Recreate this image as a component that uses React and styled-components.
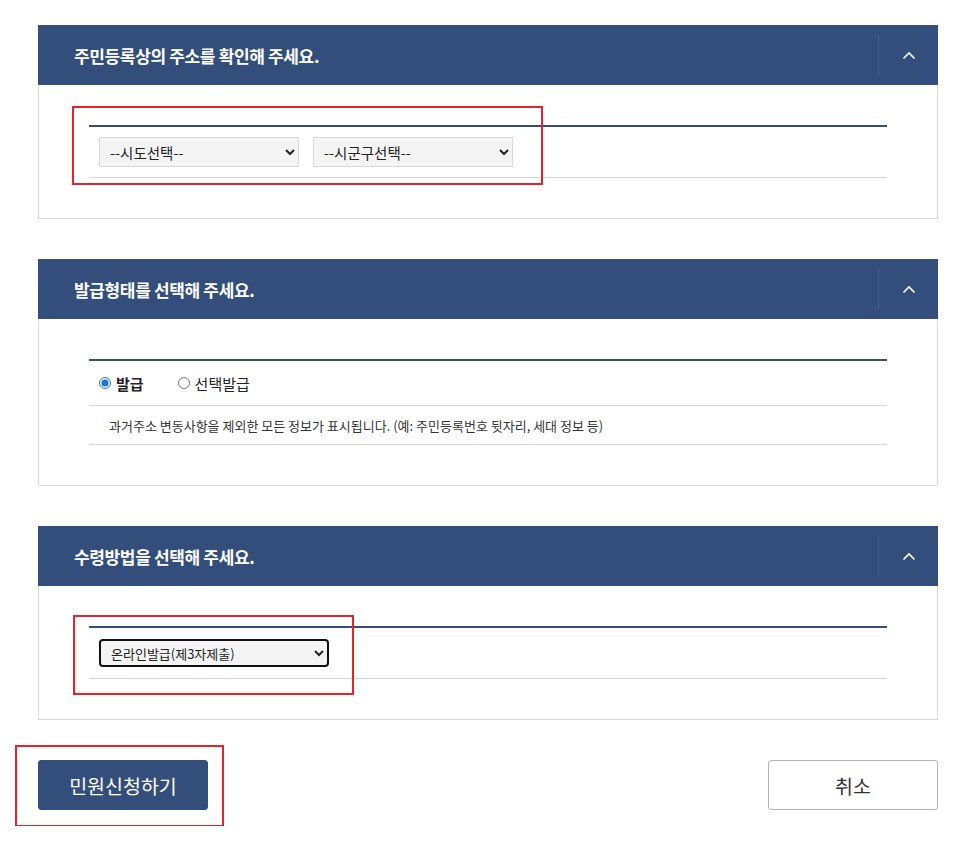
import React, { useState } from 'react';
import styled, { createGlobalStyle } from 'styled-components';

const GlobalStyle = createGlobalStyle`
  html, body {
    margin: 0;
    padding: 0;
    background: #fff;
  }
  body {
    font-family: "Noto Sans CJK KR", "Noto Sans", sans-serif;
    color: #333;
  }
`;

const NAVY = '#344e7b';

const Page = styled.div`
  width: 900px;
  padding: 25px 0 16px 38px;
  display: flex;
  flex-direction: column;
  gap: 40px;
`;

const Section = styled.section`
  display: flex;
  flex-direction: column;
`;

const Header = styled.div`
  height: 60px;
  background: ${NAVY};
  display: flex;
  align-items: center;
  justify-content: space-between;
`;

const Title = styled.h2`
  margin: 0 0 0 36px;
  font-size: 17px;
  font-weight: 700;
  letter-spacing: -0.35px;
  color: #fff;
`;

const Toggle = styled.button`
  width: 60px;
  height: 40px;
  border: 0;
  border-left: 1px solid #4a6290;
  background: transparent;
  display: flex;
  align-items: center;
  justify-content: center;
  padding: 0 0 0 1px;
  cursor: pointer;
`;

const Body = styled.div`
  position: relative;
  border: 1px solid #d9d9d9;
  border-top: 0;
  padding: 40px 50px 40px;
`;

const Table = styled.div`
  border-top: 2px solid ${NAVY};
`;

const Row = styled.div`
  display: flex;
  align-items: center;
  gap: ${p => p.$gap ?? 14}px;
  min-height: ${p => p.$h}px;
  padding-left: ${p => p.$pl || 10}px;
  border-bottom: 1px solid #d5d5d5;
`;

const Select = styled.select`
  width: 200px;
  height: 30px;
  background: #f4f4f4;
  border: 1px solid #d8d8d8;
  border-radius: 0;
  padding: 0 6px;
  font-family: "Noto Sans CJK KR", sans-serif;
  font-size: 14.5px;
  color: #222;
  outline: none;
`;

const FocusSelect = styled(Select)`
  width: 230px;
  height: 28px;
  font-size: 13px;
  border: 2px solid #111;
  border-radius: 4px;
`;

const RadioLabel = styled.label`
  display: flex;
  align-items: center;
  gap: 5px;
  font-size: 15px;
  font-weight: ${p => (p.$checked ? 700 : 400)};
  color: #222;
  margin-right: 34px;
  cursor: pointer;

  input {
    margin: 0;
    width: 12px;
    height: 12px;
    accent-color: #1a73e8;
  }
`;

const Note = styled.p`
  margin: 0;
  font-size: 13px;
  color: #333;
`;

const Actions = styled.div`
  position: relative;
  display: flex;
  justify-content: space-between;
`;

const Button = styled.button`
  width: 170px;
  height: 50px;
  border-radius: 3px;
  font-family: "Noto Sans CJK KR", sans-serif;
  font-size: 19.5px;
  cursor: pointer;
  background: ${p => (p.$primary ? NAVY : '#fff')};
  color: ${p => (p.$primary ? '#fff' : '#333')};
  border: 1px solid ${p => (p.$primary ? NAVY : '#b4b4b4')};
`;

const Mark = styled.div`
  position: absolute;
  border: 2px solid #e8212b;
  pointer-events: none;
`;

const ChevronUp = () => (
  <svg width="14" height="9" viewBox="0 0 14 9" fill="none">
    <polyline points="1.5,7.5 7,2 12.5,7.5" stroke="#fff" strokeWidth="1.6" />
  </svg>
);

const Panel = ({ title, children }) => (
  <Section>
    <Header>
      <Title>{title}</Title>
      <Toggle aria-label="접기"><ChevronUp /></Toggle>
    </Header>
    <Body>{children}</Body>
  </Section>
);

const App = () => {
  const [type, setType] = useState('all');

  return (
    <>
      <GlobalStyle />
      <Page>
        <Panel title="주민등록상의 주소를 확인해 주세요.">
          <Table>
            <Row $h={50}>
              <Select defaultValue="">
                <option value="">--시도선택--</option>
              </Select>
              <Select defaultValue="">
                <option value="">--시군구선택--</option>
              </Select>
            </Row>
          </Table>
          <Mark style={{ left: 33, top: 21, width: 467, height: 75 }} />
        </Panel>

        <Panel title="발급형태를 선택해 주세요.">
          <Table>
            <Row $h={44} $gap={0}>
              <RadioLabel $checked={type === 'all'}>
                <input type="radio" name="type" checked={type === 'all'} onChange={() => setType('all')} />
                발급
              </RadioLabel>
              <RadioLabel $checked={type === 'sel'}>
                <input type="radio" name="type" checked={type === 'sel'} onChange={() => setType('sel')} />
                선택발급
              </RadioLabel>
            </Row>
            <Row $h={38} $pl={20}>
              <Note>과거주소 변동사항을 제외한 모든 정보가 표시됩니다. (예: 주민등록번호 뒷자리, 세대 정보 등)</Note>
            </Row>
          </Table>
        </Panel>

        <Panel title="수령방법을 선택해 주세요.">
          <Table>
            <Row $h={50}>
              <FocusSelect defaultValue="online">
                <option value="online">온라인발급(제3자제출)</option>
              </FocusSelect>
            </Row>
          </Table>
          <Mark style={{ left: 34, top: 29, width: 277, height: 76 }} />
        </Panel>

        <Actions>
          <Button $primary>민원신청하기</Button>
          <Button>취소</Button>
          <Mark style={{ left: -23, top: -15, width: 205, height: 78 }} />
        </Actions>
      </Page>
    </>
  );
};

export default App;
